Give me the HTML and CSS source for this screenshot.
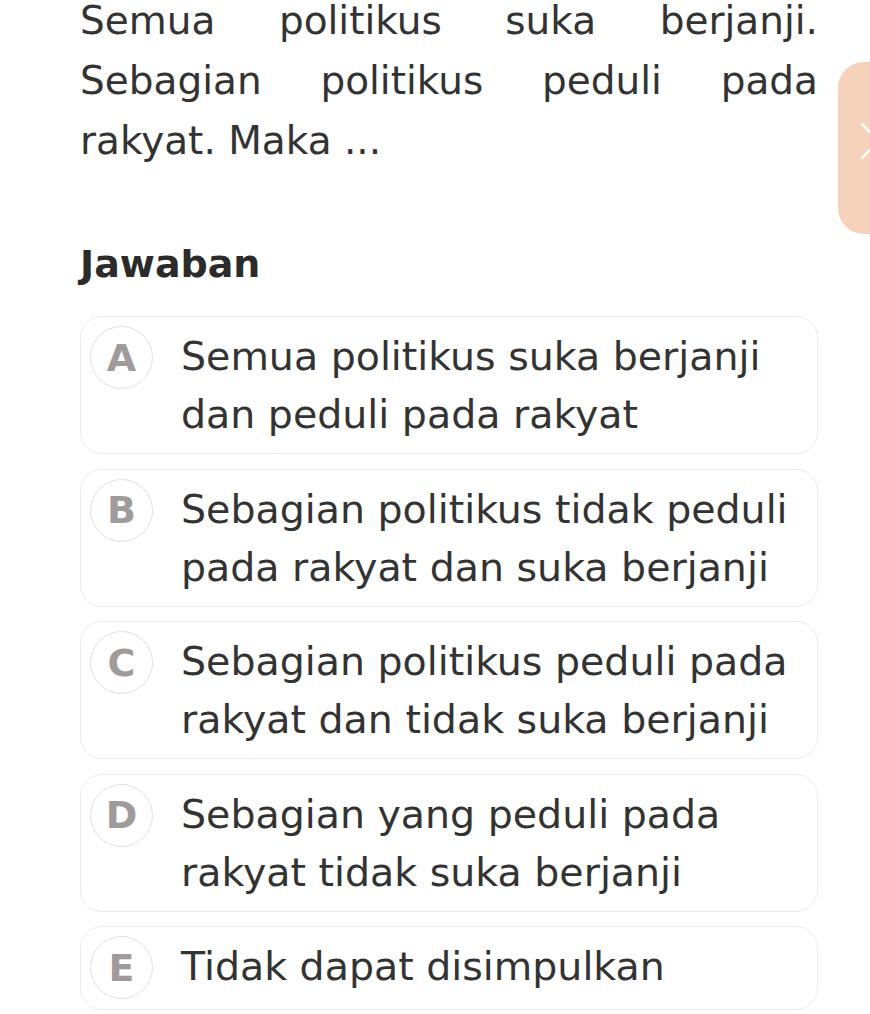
FILE: index.html
```html
<!DOCTYPE html>
<html lang="id">
<head>
    <meta charset="UTF-8">
    <meta name="viewport" content="width=device-width, initial-scale=1.0">
    <title>Soal Logika</title>
    <link rel="stylesheet" href="styles.css">
</head>
<body>
    <div class="page">
        <p class="question">Semua politikus suka berjanji. Sebagian politikus peduli pada rakyat. Maka ...</p>

        <h2 class="answer-title">Jawaban</h2>

        <div class="options">
            <div class="option">
                <span class="option-letter">A</span>
                <span class="option-text">Semua politikus suka berjanji dan peduli pada rakyat</span>
            </div>
            <div class="option">
                <span class="option-letter">B</span>
                <span class="option-text">Sebagian politikus tidak peduli pada rakyat dan suka berjanji</span>
            </div>
            <div class="option">
                <span class="option-letter">C</span>
                <span class="option-text">Sebagian politikus peduli pada rakyat dan tidak suka berjanji</span>
            </div>
            <div class="option">
                <span class="option-letter">D</span>
                <span class="option-text">Sebagian yang peduli pada rakyat tidak suka berjanji</span>
            </div>
            <div class="option">
                <span class="option-letter">E</span>
                <span class="option-text">Tidak dapat disimpulkan</span>
            </div>
        </div>
    </div>

    <div class="side-tab">
        <svg width="32" height="172" viewBox="0 0 32 172">
            <polyline points="24,62 40,79 24,96" fill="none" stroke="#fff" stroke-width="2.5" stroke-linecap="round"/>
        </svg>
    </div>
</body>
</html>
```

FILE: styles.css
```css
body, html {
    margin: 0;
    padding: 0;
    background-color: #ffffff;
    font-family: "DejaVu Sans", sans-serif;
    color: #333333;
    overflow: hidden;
}
.page {
    width: 738px;
    padding: 0 0 0 80px;
}
.question {
    margin: 0;
    margin-top: -9px;
    font-size: 39px;
    line-height: 60px;
    text-align: justify;
}
.answer-title {
    margin: 71px 0 0 0;
    font-size: 38px;
    line-height: 44px;
    font-weight: bold;
    color: #2b2b2b;
}
.options {
    display: flex;
    flex-direction: column;
    gap: 14.5px;
    margin-top: 30px;
}
.option {
    display: flex;
    align-items: flex-start;
    gap: 28px;
    padding: 9px 10px 10px 9px;
    border: 1.5px solid #ebebeb;
    border-radius: 22px;
}
.option-letter {
    flex: none;
    width: 61px;
    height: 61px;
    border: 1.5px solid #e0e0e0;
    border-radius: 50%;
    display: flex;
    align-items: center;
    justify-content: center;
    font-size: 38px;
    font-weight: bold;
    color: #a09b9b;
}
.option-text {
    font-size: 39.5px;
    line-height: 58px;
    margin-top: 1px;
}
.side-tab {
    position: absolute;
    top: 62px;
    left: 838px;
    width: 60px;
    height: 172px;
    border-radius: 26px;
    background-color: #f6d2bc;
}
.side-tab svg {
    display: block;
}
```
